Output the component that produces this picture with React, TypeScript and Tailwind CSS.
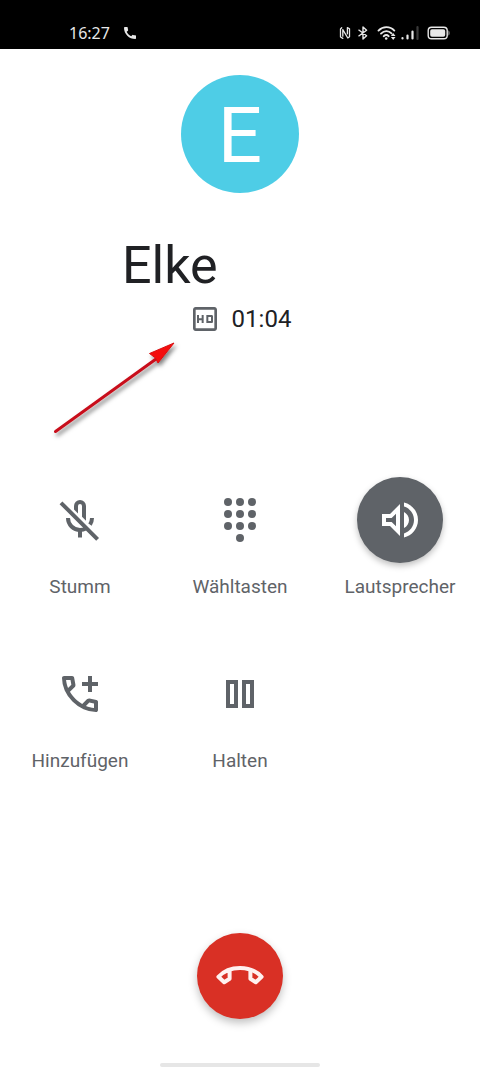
import type { ReactNode } from "react";

function Glyph({ children, className = "size-12", viewBox = "0 0 24 24" }: { children: ReactNode; className?: string; viewBox?: string }) {
  return (
    <svg viewBox={viewBox} className={className} fill="currentColor" aria-hidden="true">
      {children}
    </svg>
  );
}

function StatusBar() {
  return (
    <header className="flex h-[49px] items-center justify-between bg-black pt-4 pr-[29px] pl-[69px] text-[#e8e8e8]">
      <div className="flex items-center gap-3">
        <time className="font-['Noto_Sans',sans-serif] text-[16px] leading-5">16:27</time>
        <Glyph className="size-4">
          <path d="M20.01 15.38c-1.23 0-2.42-.2-3.53-.56a.98.98 0 0 0-1.01.24l-1.57 1.97c-2.83-1.35-5.48-3.9-6.89-6.83l1.95-1.66c.27-.28.35-.67.24-1.02-.37-1.11-.56-2.3-.56-3.53 0-.54-.45-.99-.99-.99H4.19C3.65 3 3 3.24 3 3.99 3 13.28 10.73 21 20.01 21c.71 0 .99-.63.99-1.18v-3.45c0-.54-.45-.99-.99-.99z" />
        </Glyph>
      </div>
      <div className="flex items-center">
        <svg viewBox="0 0 12 14" className="mr-1.5 h-3.5 w-3" fill="none" stroke="currentColor" strokeWidth="1.3" strokeLinejoin="round" strokeLinecap="round" aria-hidden="true">
          <path d="M3.8 10.200V3.600l5 8.400 1.700-1.200V2.800L8.400 1.600v6.200M3.800 12.400 1.500 11V3l1.200-1.200" />
        </svg>
        <svg viewBox="0 0 12 14" className="mr-2 h-3.5 w-3" fill="none" stroke="currentColor" strokeWidth="1.4" strokeLinejoin="round" aria-hidden="true">
          <path d="M1.500 3.800 9.600 9.800 6 13V1l3.600 3.200-8.100 6" />
        </svg>
        <svg viewBox="0 0 20 16" className="mr-1 h-4 w-5" fill="none" stroke="currentColor" strokeWidth="1.9" strokeLinecap="round" aria-hidden="true">
          <path d="M1.5 5.6C6 1 13 1 17.3 5.6M4 8.600c3.300-3.200 7.600-3.200 10.500-.2M6.700 11.200c1.800-1.500 3.400-1.500 5 0" />
          <circle cx="9.2" cy="13.5" r="1.3" fill="currentColor" stroke="none" />
          <path d="m16.200 8 2.300 3h-4.600zM16.200 15l2.300-3h-4.600z" fill="currentColor" stroke="none" />
        </svg>
        <svg viewBox="0 0 18 16" className="mr-2 h-4 w-[18px]" fill="none" stroke="currentColor" strokeWidth="2.2" strokeLinecap="round" aria-hidden="true">
          <path d="M1.5 13v.5M6.5 10.5v3M11.5 6.5v7" />
          <path d="M16.5 2v12" stroke="#3a3a3a" />
        </svg>
        <svg viewBox="0 0 24 14" className="h-3.5 w-6" aria-hidden="true">
          <rect x="1.2" y="1.2" width="19" height="11.6" rx="3.4" fill="none" stroke="currentColor" strokeWidth="1.4" />
          <rect x="3.2" y="3.200" width="15" height="7.6" rx="1.8" fill="currentColor" />
          <path d="M21.6 4.4v5.2c1.1-.5 1.1-4.7 0-5.2z" fill="currentColor" />
        </svg>
      </div>
    </header>
  );
}

function PointerArrow() {
  return (
    <svg viewBox="0 0 150 115" className="absolute top-[281px] left-10 h-[115px] w-[150px]" aria-hidden="true">
      <defs>
        <filter id="arrow-shadow" x="-20%" y="-20%" width="140%" height="140%">
          <feDropShadow dx="2" dy="3" stdDeviation="2" floodColor="#000" floodOpacity="0.5" />
        </filter>
      </defs>
      <g filter="url(#arrow-shadow)">
        <path d="M15.5 101.5 116 29" stroke="#c8101a" strokeWidth="3" strokeLinecap="round" />
        <path d="M134 13 118 33l-2.500-5-6-4.500z" fill="#f40d10" stroke="#d80d12" strokeWidth="1" />
      </g>
    </svg>
  );
}

function MicOff() {
  return (
    <Glyph>
      <path d="M9 5a3 3 0 0 1 6 0v7.400l-2-2V5a1 1 0 0 0-2 0v3.800l-2-2zM11 17h2v3.800h-2z" />
      <path d="m2.500 3.400 18.300 18.300M6 11a6 6 0 0 0 6 6c1 0 2-.2 2.800-.7M18 11c0 1.300-.4 2.400-1 3.300" fill="none" stroke="currentColor" strokeWidth="2" />
    </Glyph>
  );
}

function Dialpad() {
  return (
    <Glyph>
      {[3, 9, 15].map((y) => [6, 12, 18].map((x) => <circle key={`${x}-${y}`} cx={x} cy={y} r="2" />))}
      <circle cx="12" cy="21" r="2" />
    </Glyph>
  );
}

function Speaker() {
  return (
    <Glyph>
      <path d="M3 9v6h4l5 5V4L7 9H3zm7-.17v6.34L7.830 13H5v-2h2.830L10 8.830zM16.500 12c0-1.770-1.020-3.290-2.500-4.030v8.050c1.480-.73 2.500-2.250 2.500-4.020zM14 3.230v2.060c2.890.86 5 3.540 5 6.710s-2.110 5.850-5 6.710v2.060c4.010-.91 7-4.490 7-8.770 0-4.280-2.990-7.860-7-8.770z" />
    </Glyph>
  );
}

function AddCall() {
  return (
    <Glyph>
      <path d="M19.950 21q-3.125 0-6.175-1.362t-5.550-3.863-3.862-5.550T3 4.050q0-.45.3-.75t.75-.3H8.100q.35 0 .625.238t.325.562l.65 3.500q.05.4-.025.675T9.400 8.450L6.975 10.900q.5.925 1.187 1.787t1.513 1.663q.775.775 1.625 1.438T13.100 17l2.350-2.350q.225-.225.588-.337t.712-.063l3.450.7q.35.1.575.363T21 15.900v4.050q0 .45-.3.75t-.75.3M6.025 9l1.650-1.650L7.250 5H5.025q.125 1.025.35 2.025T6.025 9m8.950 8.950q.975.425 1.988.675T19 18.950v-2.200l-2.350-.475z" />
      <path d="M16 3h2v3h3v2h-3v3h-2V8h-3V6h3z" />
    </Glyph>
  );
}

function Pause() {
  return (
    <Glyph>
      <path d="M5 5h6v14H5zM7 7v10h2V7zM13 5h6v14h-6zM15 7v10h2V7z" fillRule="evenodd" />
    </Glyph>
  );
}

const actions = [
  { label: "Stumm", icon: <MicOff />, active: false },
  { label: "Wähltasten", icon: <Dialpad />, active: false },
  { label: "Lautsprecher", icon: <Speaker />, active: true },
  { label: "Hinzufügen", icon: <AddCall />, active: false },
  { label: "Halten", icon: <Pause />, active: false },
];

export default function App() {
  return (
    <div className="flex min-h-screen flex-col bg-white font-[Roboto,sans-serif] text-[#202124]">
      <StatusBar />
      <main className="relative flex grow flex-col items-center pt-[26px]">
        <div className="flex size-[118px] items-center justify-center rounded-full bg-[#4ecde6] pt-1 text-[78px] leading-none text-white">E</div>
        <h1 className="mt-[41px] w-1/2 pl-0.5 text-[52px] leading-[64px]">Elke</h1>
        <div className="mt-[5px] flex items-center gap-[11px]">
          <Glyph className="size-8 text-[#5f6368]">
            <path d="M19 3H5c-1.110 0-2 .9-2 2v14c0 1.100.89 2 2 2h14c1.100 0 2-.9 2-2V5c0-1.100-.9-2-2-2zm0 16H5V5h14v14zM7.500 13h2v2H11V9H9.500v2.500h-2V9H6v6h1.500v-2zm5.500 2h4c.55 0 1-.45 1-1v-4c0-.55-.45-1-1-1h-4v6zm1.500-4.500h2v3h-2v-3z" />
          </Glyph>
          <time className="text-[24px] leading-8">01:04</time>
        </div>
        <PointerArrow />
        <div className="mt-[142px] grid w-full grid-cols-3 gap-y-[52px]">
          {actions.map(({ label, icon, active }) => (
            <button key={label} type="button" aria-pressed={active} className="flex flex-col items-center gap-3 text-[#5f6368]">
              <span className={active ? "flex size-[86px] items-center justify-center rounded-full bg-[#5f6368] text-white shadow-[0_3px_6px_rgba(0,0,0,0.25)]" : "flex size-[86px] items-center justify-center"}>
                {icon}
              </span>
              <span className="text-[19px] leading-6">{label}</span>
            </button>
          ))}
        </div>
        <button type="button" aria-label="Auflegen" className="mt-40 mb-11 flex size-[86px] items-center justify-center rounded-full bg-[#d93025] text-[#fff1f0] shadow-[0_4px_8px_rgba(0,0,0,0.25)]">
          <Glyph>
            <path d="M6.800 9.300v4.100l-2.700 1.700-2.900-2.700C4 9.400 7.800 8 12 8s8 1.400 10.800 4.400l-2.900 2.700-2.700-1.700V9.300" fill="none" stroke="currentColor" strokeWidth="2" strokeLinejoin="round" />
          </Glyph>
        </button>
        <div className="mt-auto h-1 w-1/3 rounded-full bg-[#e6e6e6]" />
      </main>
    </div>
  );
}
